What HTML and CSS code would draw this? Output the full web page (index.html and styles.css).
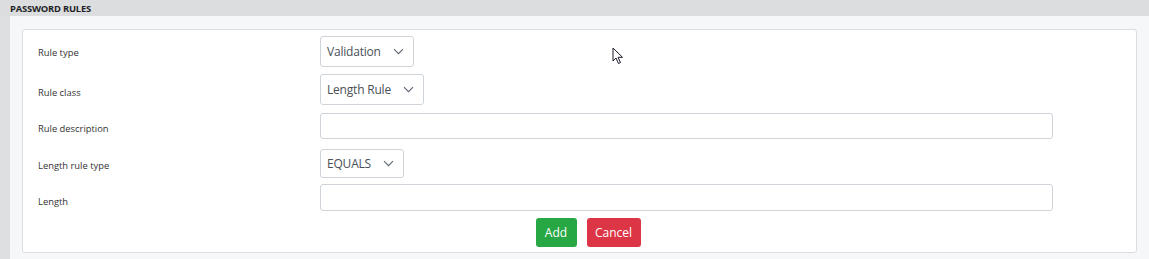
FILE: index.html
```html
<!DOCTYPE html>
<html lang="en">
<head>
    <meta charset="UTF-8">
    <title>Password rules</title>
    <link rel="stylesheet" href="styles.css">
</head>
<body>
<div class="page">
    <div class="section-title">PASSWORD RULES</div>
    <div class="section-body">
        <div class="card">
            <div class="row row-type">
                <label>Rule type</label>
                <div class="select w-validation"><span>Validation</span>
                    <svg width="11" height="7" viewBox="0 0 11 7"><path d="M1 1.2 L5.5 5.7 L10 1.2" fill="none" stroke="#5a6470" stroke-width="1.1"/></svg>
                </div>
            </div>
            <div class="row row-class">
                <label>Rule class</label>
                <div class="select w-length"><span>Length Rule</span>
                    <svg width="11" height="7" viewBox="0 0 11 7"><path d="M1 1.2 L5.5 5.7 L10 1.2" fill="none" stroke="#5a6470" stroke-width="1.1"/></svg>
                </div>
            </div>
            <div class="row row-desc">
                <label>Rule description</label>
                <div class="input"></div>
            </div>
            <div class="row row-ltype">
                <label>Length rule type</label>
                <div class="select w-equals"><span>EQUALS</span>
                    <svg width="11" height="7" viewBox="0 0 11 7"><path d="M1 1.2 L5.5 5.7 L10 1.2" fill="none" stroke="#5a6470" stroke-width="1.1"/></svg>
                </div>
            </div>
            <div class="row row-len">
                <label>Length</label>
                <div class="input"></div>
            </div>
            <div class="actions">
                <button class="btn btn-add">Add</button>
                <button class="btn btn-cancel">Cancel</button>
            </div>
        </div>
    </div>
    <!-- mouse pointer seen in the screenshot -->
    <svg class="cursor" width="13" height="19" viewBox="0 0 13 19">
        <path d="M1 1 L1 14 L4 11 L6.5 16.5 L8.5 15.5 L6 10.3 L10.5 10.3 Z" fill="#fff" stroke="#1a1a2a" stroke-width="1" stroke-linejoin="round"/>
    </svg>
</div>
</body>
</html>
```

FILE: styles.css
```css
body {
    margin: 0;
    font-family: 'Open Sans', sans-serif;
    background-color: #dedfe1;
}

.page {
    position: relative;
    height: 259px;
    overflow: hidden;
}

.section-title {
    height: 16px;
    line-height: 17px;
    padding-left: 10px;
    font-size: 9.4px;
    font-weight: bold;
    letter-spacing: -0.2px;
    color: #1f2328;
    background-color: #dcdddf;
}

.section-body {
    margin-left: 10px;
    background-color: #f6f7f9;
    padding: 13px 12px 6px 12px;
}

.card {
    background-color: #fff;
    border: 1px solid #dcdde0;
    border-radius: 3px;
    padding: 6px 0 5px 15px;
}

.row {
    display: flex;
    align-items: center;
}

.row label {
    width: 282px;
    font-size: 9.4px;
    color: #333;
    padding-top: 2px;
}

.row-class { margin-top: 7px; }
.row-desc { margin-top: 8px; }
.row-ltype { margin-top: 10px; }
.row-len { margin-top: 6px; }
.row-class label { padding-top: 6px; }
.row-desc label { padding-top: 5px; }
.row-ltype label { padding-top: 4px; }
.row-len label { padding-top: 7px; }

.select {
    box-sizing: border-box;
    height: 31px;
    border: 1px solid #ced4da;
    border-radius: 3px;
    display: flex;
    align-items: center;
    justify-content: space-between;
    padding: 0 9px 0 6px;
    font-size: 12px;
    color: #495057;
}

.select span {
    letter-spacing: -0.2px;
}

.w-validation { width: 94px; }
.w-length { width: 104px; }
.w-equals { width: 84px; height: 29px; }

.input {
    box-sizing: border-box;
    width: 733px;
    height: 26px;
    border: 1px solid #ced4da;
    border-radius: 3px;
}

.row-len .input { height: 27px; }

.actions {
    display: flex;
    justify-content: center;
    gap: 10px;
    margin-top: 7px;
    padding-left: 2px;
}

.btn {
    height: 29px;
    border: none;
    border-radius: 3px;
    color: #fff;
    font-family: 'Open Sans', sans-serif;
    font-size: 12px;
    padding: 0;
}

.btn-add {
    width: 41px;
    background-color: #28a745;
}

.btn-cancel {
    width: 54px;
    background-color: #dc3545;
}

.cursor {
    position: absolute;
    left: 612px;
    top: 47px;
}
```
